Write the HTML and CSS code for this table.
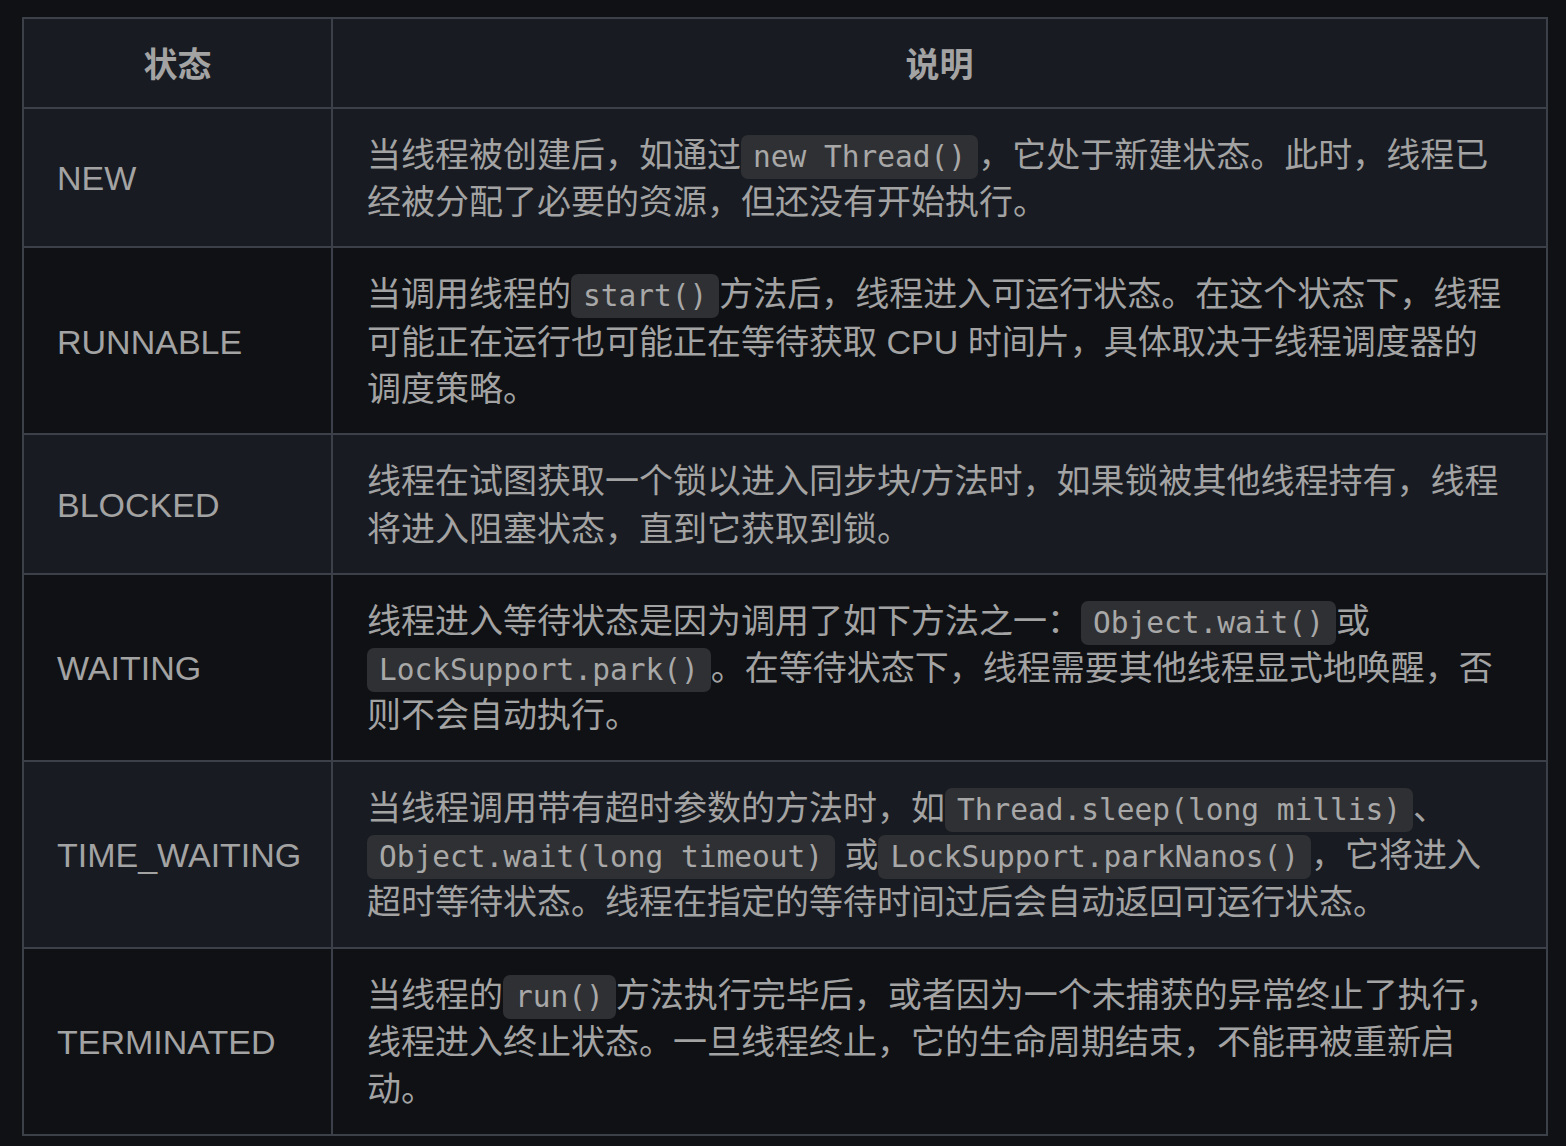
FILE: index.html
```html
<!DOCTYPE html>
<html lang="zh-CN">
<head>
<meta charset="utf-8">
<title>线程状态</title>
<link rel="stylesheet" href="styles.css">
</head>
<body>
<div class="wrap">
<table class="states">
  <colgroup><col class="c-state"><col class="c-desc"></colgroup>
  <thead>
    <tr><th>状态</th><th>说明</th></tr>
  </thead>
  <tbody>
    <tr>
      <td class="name">NEW</td>
      <td class="desc">当线程被创建后，如通过<code>new Thread()</code>，它处于新建状态。此时，线程已经被分配了必要的资源，但还没有开始执行。</td>
    </tr>
    <tr>
      <td class="name">RUNNABLE</td>
      <td class="desc">当调用线程的<code>start()</code>方法后，线程进入可运行状态。在这个状态下，线程可能正在运行也可能正在等待获取 CPU 时间片，具体取决于线程调度器的调度策略。</td>
    </tr>
    <tr>
      <td class="name">BLOCKED</td>
      <td class="desc">线程在试图获取一个锁以进入同步块/方法时，如果锁被其他线程持有，线程将进入阻塞状态，直到它获取到锁。</td>
    </tr>
    <tr>
      <td class="name">WAITING</td>
      <td class="desc">线程进入等待状态是因为调用了如下方法之一：<code>Object.wait()</code>或<code>LockSupport.park()</code>。在等待状态下，线程需要其他线程显式地唤醒，否则不会自动执行。</td>
    </tr>
    <tr>
      <td class="name">TIME_WAITING</td>
      <td class="desc">当线程调用带有超时参数的方法时，如<code>Thread.sleep(long millis)</code>、<code>Object.wait(long timeout)</code> 或<code>LockSupport.parkNanos()</code>，它将进入超时等待状态。线程在指定的等待时间过后会自动返回可运行状态。</td>
    </tr>
    <tr>
      <td class="name">TERMINATED</td>
      <td class="desc">当线程的<code>run()</code>方法执行完毕后，或者因为一个未捕获的异常终止了执行，线程进入终止状态。一旦线程终止，它的生命周期结束，不能再被重新启动。</td>
    </tr>
  </tbody>
</table>
</div>
</body>
</html>
```
FILE: styles.css
```css
html, body {
  margin: 0;
  padding: 0;
  background: #0f1115;
}

body {
  font-family: "Liberation Sans", "Noto Sans CJK SC", sans-serif;
  font-size: 34px;
  line-height: 47.3px;
  color: #a3a3a3;
}

.wrap {
  padding: 17px 0 0 22px;
}

.states {
  table-layout: fixed;
  width: 1526px;
  border-collapse: separate;
  border-spacing: 0;
  border-top: 2px solid #3c4048;
  border-left: 2px solid #3c4048;
}

.c-state {
  width: 309px;
}

.states th,
.states td {
  border-right: 2px solid #3c4048;
  border-bottom: 2px solid #3c4048;
  padding: 23px 40px 20px 34px;
  vertical-align: middle;
}

.states th {
  font-weight: bold;
  text-align: center;
  padding: 22.5px 0 18px;
}

.states td.name {
  padding-left: 33px;
  padding-right: 10px;
}

.states thead tr,
.states tbody tr:nth-child(odd) {
  background: #181b21;
}

.states tbody tr:nth-child(even) {
  background: #0f1115;
}

code {
  font-family: "DejaVu Sans Mono", "Noto Sans CJK SC", monospace;
  font-size: 29.5px;
  line-height: 1;
  background: #2f3033;
  color: #a8a8a8;
  border-radius: 7px;
  padding: 5px 12px;
  white-space: nowrap;
}
```
